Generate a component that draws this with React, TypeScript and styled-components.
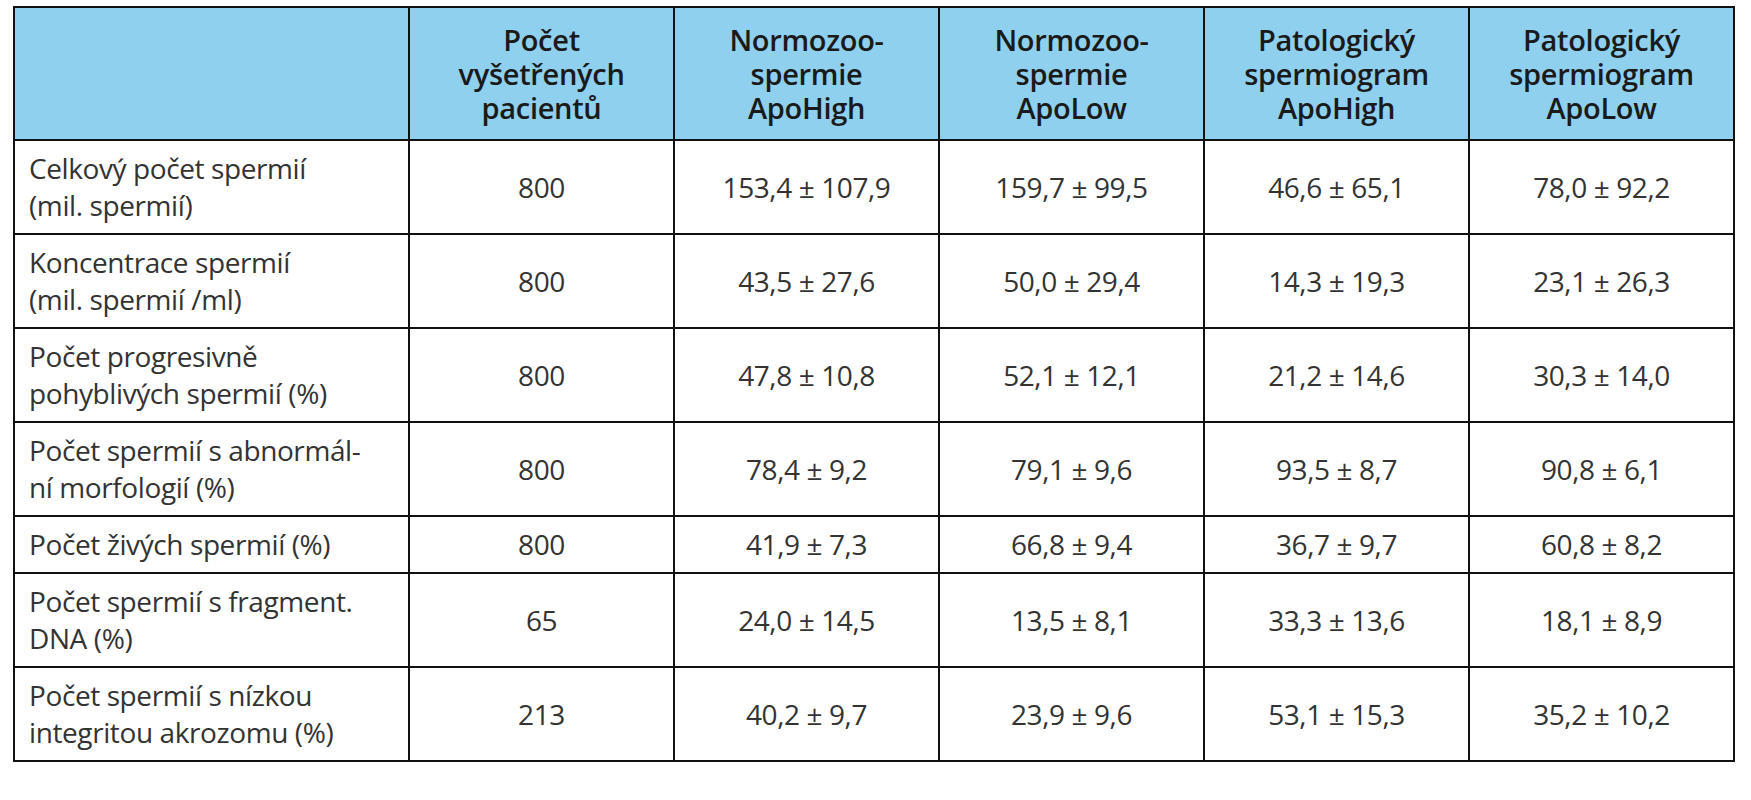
import React from "react";
import styled, { createGlobalStyle } from "styled-components";

const GlobalStyle = createGlobalStyle`
  html, body {
    margin: 0;
    padding: 0;
    background: #ffffff;
  }
  body {
    font-family: "Open Sans", "Noto Sans", "Liberation Sans", sans-serif;
  }
`;

type Row = {
  label: string[];
  count: string;
  values: string[];
};

const columns = [
  ["Počet", "vyšetřených", "pacientů"],
  ["Normozoo-", "spermie", "ApoHigh"],
  ["Normozoo-", "spermie", "ApoLow"],
  ["Patologický", "spermiogram", "ApoHigh"],
  ["Patologický", "spermiogram", "ApoLow"],
];

const rows: Row[] = [
  {
    label: ["Celkový počet spermií", "(mil. spermií)"],
    count: "800",
    values: ["153,4 ± 107,9", "159,7 ± 99,5", "46,6 ± 65,1", "78,0 ± 92,2"],
  },
  {
    label: ["Koncentrace spermií", "(mil. spermií /ml)"],
    count: "800",
    values: ["43,5 ± 27,6", "50,0 ± 29,4", "14,3 ± 19,3", "23,1 ± 26,3"],
  },
  {
    label: ["Počet progresivně", "pohyblivých spermií (%)"],
    count: "800",
    values: ["47,8 ± 10,8", "52,1 ± 12,1", "21,2 ± 14,6", "30,3 ± 14,0"],
  },
  {
    label: ["Počet spermií s abnormál-", "ní morfologií (%)"],
    count: "800",
    values: ["78,4 ± 9,2", "79,1 ± 9,6", "93,5 ± 8,7", "90,8 ± 6,1"],
  },
  {
    label: ["Počet živých spermií (%)"],
    count: "800",
    values: ["41,9 ± 7,3", "66,8 ± 9,4", "36,7 ± 9,7", "60,8 ± 8,2"],
  },
  {
    label: ["Počet spermií s fragment.", "DNA (%)"],
    count: "65",
    values: ["24,0 ± 14,5", "13,5 ± 8,1", "33,3 ± 13,6", "18,1 ± 8,9"],
  },
  {
    label: ["Počet spermií s nízkou", "integritou akrozomu (%)"],
    count: "213",
    values: ["40,2 ± 9,7", "23,9 ± 9,6", "53,1 ± 15,3", "35,2 ± 10,2"],
  },
];

export default function App() {
  return (
    <>
      <GlobalStyle />
      <Page>
        <Table>
          <colgroup>
            <Col width={395} />
            {columns.map((_, i) => (
              <Col key={i} width={265} />
            ))}
          </colgroup>
          <thead>
            <tr>
              <HeadCell />
              {columns.map((lines, i) => (
                <HeadCell key={i}>
                  {lines.map((l, j) => (
                    <Line key={j}>{l}</Line>
                  ))}
                </HeadCell>
              ))}
            </tr>
          </thead>
          <tbody>
            {rows.map((row, i) => (
              <tr key={i}>
                <LabelCell>
                  {row.label.map((l, j) => (
                    <Line key={j}>{l}</Line>
                  ))}
                </LabelCell>
                <ValueCell>{row.count}</ValueCell>
                {row.values.map((v, j) => (
                  <ValueCell key={j}>{v}</ValueCell>
                ))}
              </tr>
            ))}
          </tbody>
        </Table>
      </Page>
    </>
  );
}

const Page = styled.div`
  padding: 6px 0 0 13px;
`;

const Table = styled.table`
  border-collapse: collapse;
  table-layout: fixed;
  width: 1720px;
  border: 2px solid #111111;
`;

const Col = styled.col<{ width: number }>`
  width: ${({ width }) => width}px;
`;

const HeadCell = styled.th`
  background-color: #8ed0ee;
  border: 2px solid #111111;
  height: 131px;
  padding: 0 6px;
  text-align: center;
  vertical-align: middle;
  font-size: 29px;
  font-weight: 600;
  line-height: 34px;
  color: #1a1a1a;
  letter-spacing: -0.3px;
`;

const Line = styled.div`
  white-space: nowrap;
`;

const BodyCell = styled.td`
  border: 2px solid #111111;
  padding: 9px 14px;
  font-size: 28px;
  line-height: 37px;
  color: #333333;
  vertical-align: middle;
  letter-spacing: -0.4px;
`;

const LabelCell = styled(BodyCell)`
  text-align: left;
`;

const ValueCell = styled(BodyCell)`
  text-align: center;
`;
